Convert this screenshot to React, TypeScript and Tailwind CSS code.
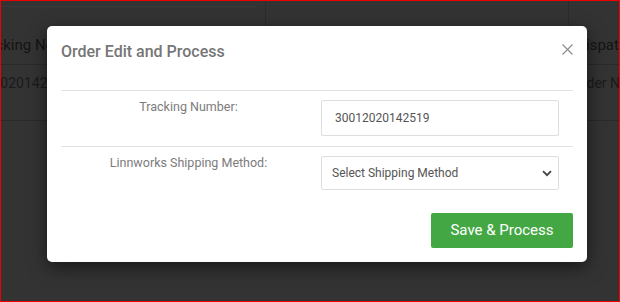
import React from 'react';

export default function App() {
  return (
    <div className="relative h-[302px] w-[620px] overflow-hidden border border-[#ee0000] bg-[#333333] font-['Roboto',sans-serif]">
      {/* page behind the overlay */}
      <div className="flex h-[25px]">
        <div className="h-[6px] w-[255px] border-b border-[#3b3b3b]" />
        <div className="ml-[9px] h-full border-l border-[#2c2c2c]" />
        <div className="ml-[302px] h-full border-l border-[#2c2c2c]" />
      </div>
      <div className="flex h-[39px] items-center justify-between border-b border-[#2a2a2a] text-[15px] text-[#141414]">
        <span className="-ml-[27px]">Tracking No</span>
        <span className="-mr-[16px]">Dispatch</span>
      </div>
      <div className="flex h-[56px] items-start justify-between border-b border-[#2a2a2a] pt-[8px] text-[14px] text-[#1a1a1a]">
        <span className="-ml-[40px]">300120201425</span>
        <span className="-mr-[9px]">Order No</span>
      </div>

      {/* modal */}
      <div className="absolute left-[46px] top-[25px] w-[540px] rounded-[5px] bg-white px-[14px] pb-[14px] shadow-[0_5px_18px_rgba(0,0,0,0.55)]">
        <div className="flex items-start justify-between pt-[14px] pb-[26px]">
          <h4 className="text-[16px] leading-[24px] font-medium text-[#767676]">Order Edit and Process</h4>
          <button className="mt-[4px] text-[#8a8a8a]">
            <svg width="11" height="11" viewBox="0 0 11 11" fill="none" stroke="currentColor" strokeWidth="1.1">
              <path d="M0.5 0.5L10.5 10.5M10.5 0.5L0.5 10.5" />
            </svg>
          </button>
        </div>

        <div className="flex h-[56px] border-t border-[#e2e2e2]">
          <label className="w-[255px] pt-[6px] text-center text-[12.5px] leading-[20px] text-[#7c7c7c]">Tracking Number:</label>
          <div className="ml-[5px] mt-[9px] flex h-[36px] w-[238px] items-center rounded-[2px] border border-[#dedede] px-[13px] text-[12px] text-[#555555]">
            30012020142519
          </div>
        </div>

        <div className="flex border-t border-[#e2e2e2]">
          <label className="w-[255px] pt-[6px] text-center text-[12.5px] leading-[20px] text-[#7c7c7c]">Linnworks Shipping Method:</label>
          <div className="ml-[5px] mt-[9px] flex h-[34px] w-[238px] items-center justify-between rounded-[2px] border border-[#dedede] pl-[10px] pr-[6px] text-[12px] text-[#555555]">
            <span>Select Shipping Method</span>
            <svg width="10" height="7" viewBox="0 0 10 7" fill="none" stroke="#444444" strokeWidth="1.8">
              <path d="M1 1.2L5 5.2L9 1.2" />
            </svg>
          </div>
        </div>

        <div className="mt-[23px] flex justify-end">
          <button className="h-[35px] w-[142px] rounded-[2px] bg-[#43a843] text-[15px] text-white">Save &amp; Process</button>
        </div>
      </div>
    </div>
  );
}
